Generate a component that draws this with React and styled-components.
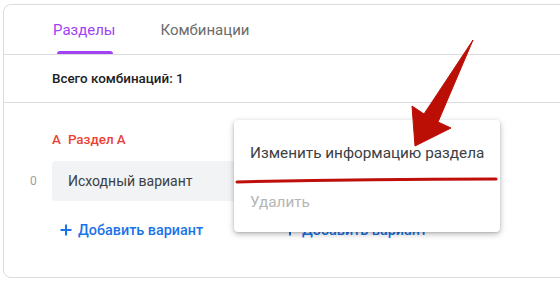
import React from "react";
import styled, { createGlobalStyle } from "styled-components";

const Global = createGlobalStyle`
  html, body { margin: 0; padding: 0; background: #fff; overflow: hidden; }
  body { font-family: Roboto, "Noto Sans", Arial, sans-serif; width: 560px; height: 282px; position: relative; }
`;

const Card = styled.div`
  margin: 4px 0 0 3px;
  width: 640px;
  height: 274px;
  border: 1px solid #dcdcdc;
  border-radius: 8px;
  box-sizing: border-box;
  overflow: hidden;
`;

const TabBar = styled.div`
  display: flex;
  gap: 43px;
  height: 49px;
  padding-left: 48px;
  border-bottom: 1px solid #dcdcdc;
`;

const Tab = styled.div`
  position: relative;
  display: flex;
  align-items: center;
  height: 100%;
  font-size: 15px;
  color: ${(p) => (p.$active ? "#a142f4" : "#6b6b6b")};
  padding: 0 1px;
  &::after {
    content: "";
    display: ${(p) => (p.$active ? "block" : "none")};
    position: absolute;
    left: 5px;
    right: 3px;
    bottom: 0;
    height: 3px;
    border-radius: 3px 3px 0 0;
    background: #a142f4;
  }
`;

const Summary = styled.div`
  height: 47px;
  display: flex;
  align-items: center;
  padding-left: 48px;
  font-size: 13.4px;
  font-weight: 500;
  color: #202124;
  border-bottom: 1px solid #dcdcdc;
`;

const Sections = styled.div`
  display: flex;
  padding: 29px 0 0 24px;
`;

const Section = styled.div`
  display: grid;
  grid-template-columns: 24px 200px;
  grid-auto-rows: auto;
`;

const SectionTitle = styled.div`
  grid-column: 2;
  font-size: 13.4px;
  font-weight: 500;
  color: #ea4335;
  height: 16px;
  line-height: 16px;
  margin-bottom: 13px;
  display: flex;
  gap: 7px;
`;

const Index = styled.div`
  grid-column: 1;
  font-size: 12px;
  color: #9aa0a6;
  display: flex;
  align-items: center;
  padding-left: 2px;
`;

const Variant = styled.div`
  grid-column: 2;
  height: 40px;
  background: #f1f3f4;
  border-radius: 4px;
  display: flex;
  align-items: center;
  padding-left: 16px;
  font-size: 14px;
  color: #3c4043;
`;

const AddButton = styled.div`
  grid-column: 2;
  margin-top: 20px;
  display: flex;
  align-items: center;
  gap: 6px;
  padding-left: 8px;
  font-size: 14.4px;
  font-weight: 500;
  color: #1a73e8;
  height: 18px;
`;

const PlusIcon = () => (
  <svg width="12" height="12" viewBox="0 0 12 12">
    <path d="M6 0.5v11M0.5 6h11" stroke="#1a73e8" strokeWidth="2" />
  </svg>
);

const Menu = styled.div`
  position: absolute;
  left: 234px;
  top: 120px;
  width: 266px;
  height: 112px;
  background: #fff;
  border-radius: 4px;
  box-shadow: 0 2px 6px rgba(0,0,0,0.28), 0 1px 2px rgba(0,0,0,0.12);
  display: flex;
  flex-direction: column;
  gap: 29px;
  padding-top: 23px;
  box-sizing: border-box;
`;

const MenuItem = styled.div`
  height: 20px;
  display: flex;
  align-items: center;
  padding-left: 16px;
  font-size: 15.3px;
  color: ${(p) => (p.$disabled ? "#b5b5b5" : "#3c4043")};
`;

const Overlay = styled.svg`
  position: absolute;
  left: 0;
  top: 0;
  pointer-events: none;
`;

export default function App() {
  return (
    <>
      <Global />
      <Card>
        <TabBar>
          <Tab $active>Разделы</Tab>
          <Tab>Комбинации</Tab>
        </TabBar>
        <Summary>Всего комбинаций: 1</Summary>
        <Sections>
          <Section>
            <SectionTitle>
              <span>А</span>
              <span>Раздел А</span>
            </SectionTitle>
            <Index>0</Index>
            <Variant>Исходный вариант</Variant>
            <AddButton>
              <PlusIcon />
              Добавить вариант
            </AddButton>
          </Section>
          <Section>
            <SectionTitle />
            <Index />
            <Variant />
            <AddButton>
              <PlusIcon />
              Добавить вариант
            </AddButton>
          </Section>
        </Sections>
      </Card>
      <Menu>
        <MenuItem>Изменить информацию раздела</MenuItem>
        <MenuItem $disabled>Удалить</MenuItem>
      </Menu>
      <Overlay width="560" height="282" viewBox="0 0 560 282">
        <path d="M237 182 Q360 179 496 179" stroke="#bf0f08" strokeWidth="3" fill="none" strokeLinecap="round" />
        <path d="M473 40 L438 122 L451 128 L415 146 L412 106 L424 114 Z" fill="#bb0f06" stroke="#bb0f06" strokeWidth="1" strokeLinejoin="round" />
      </Overlay>
    </>
  );
}
